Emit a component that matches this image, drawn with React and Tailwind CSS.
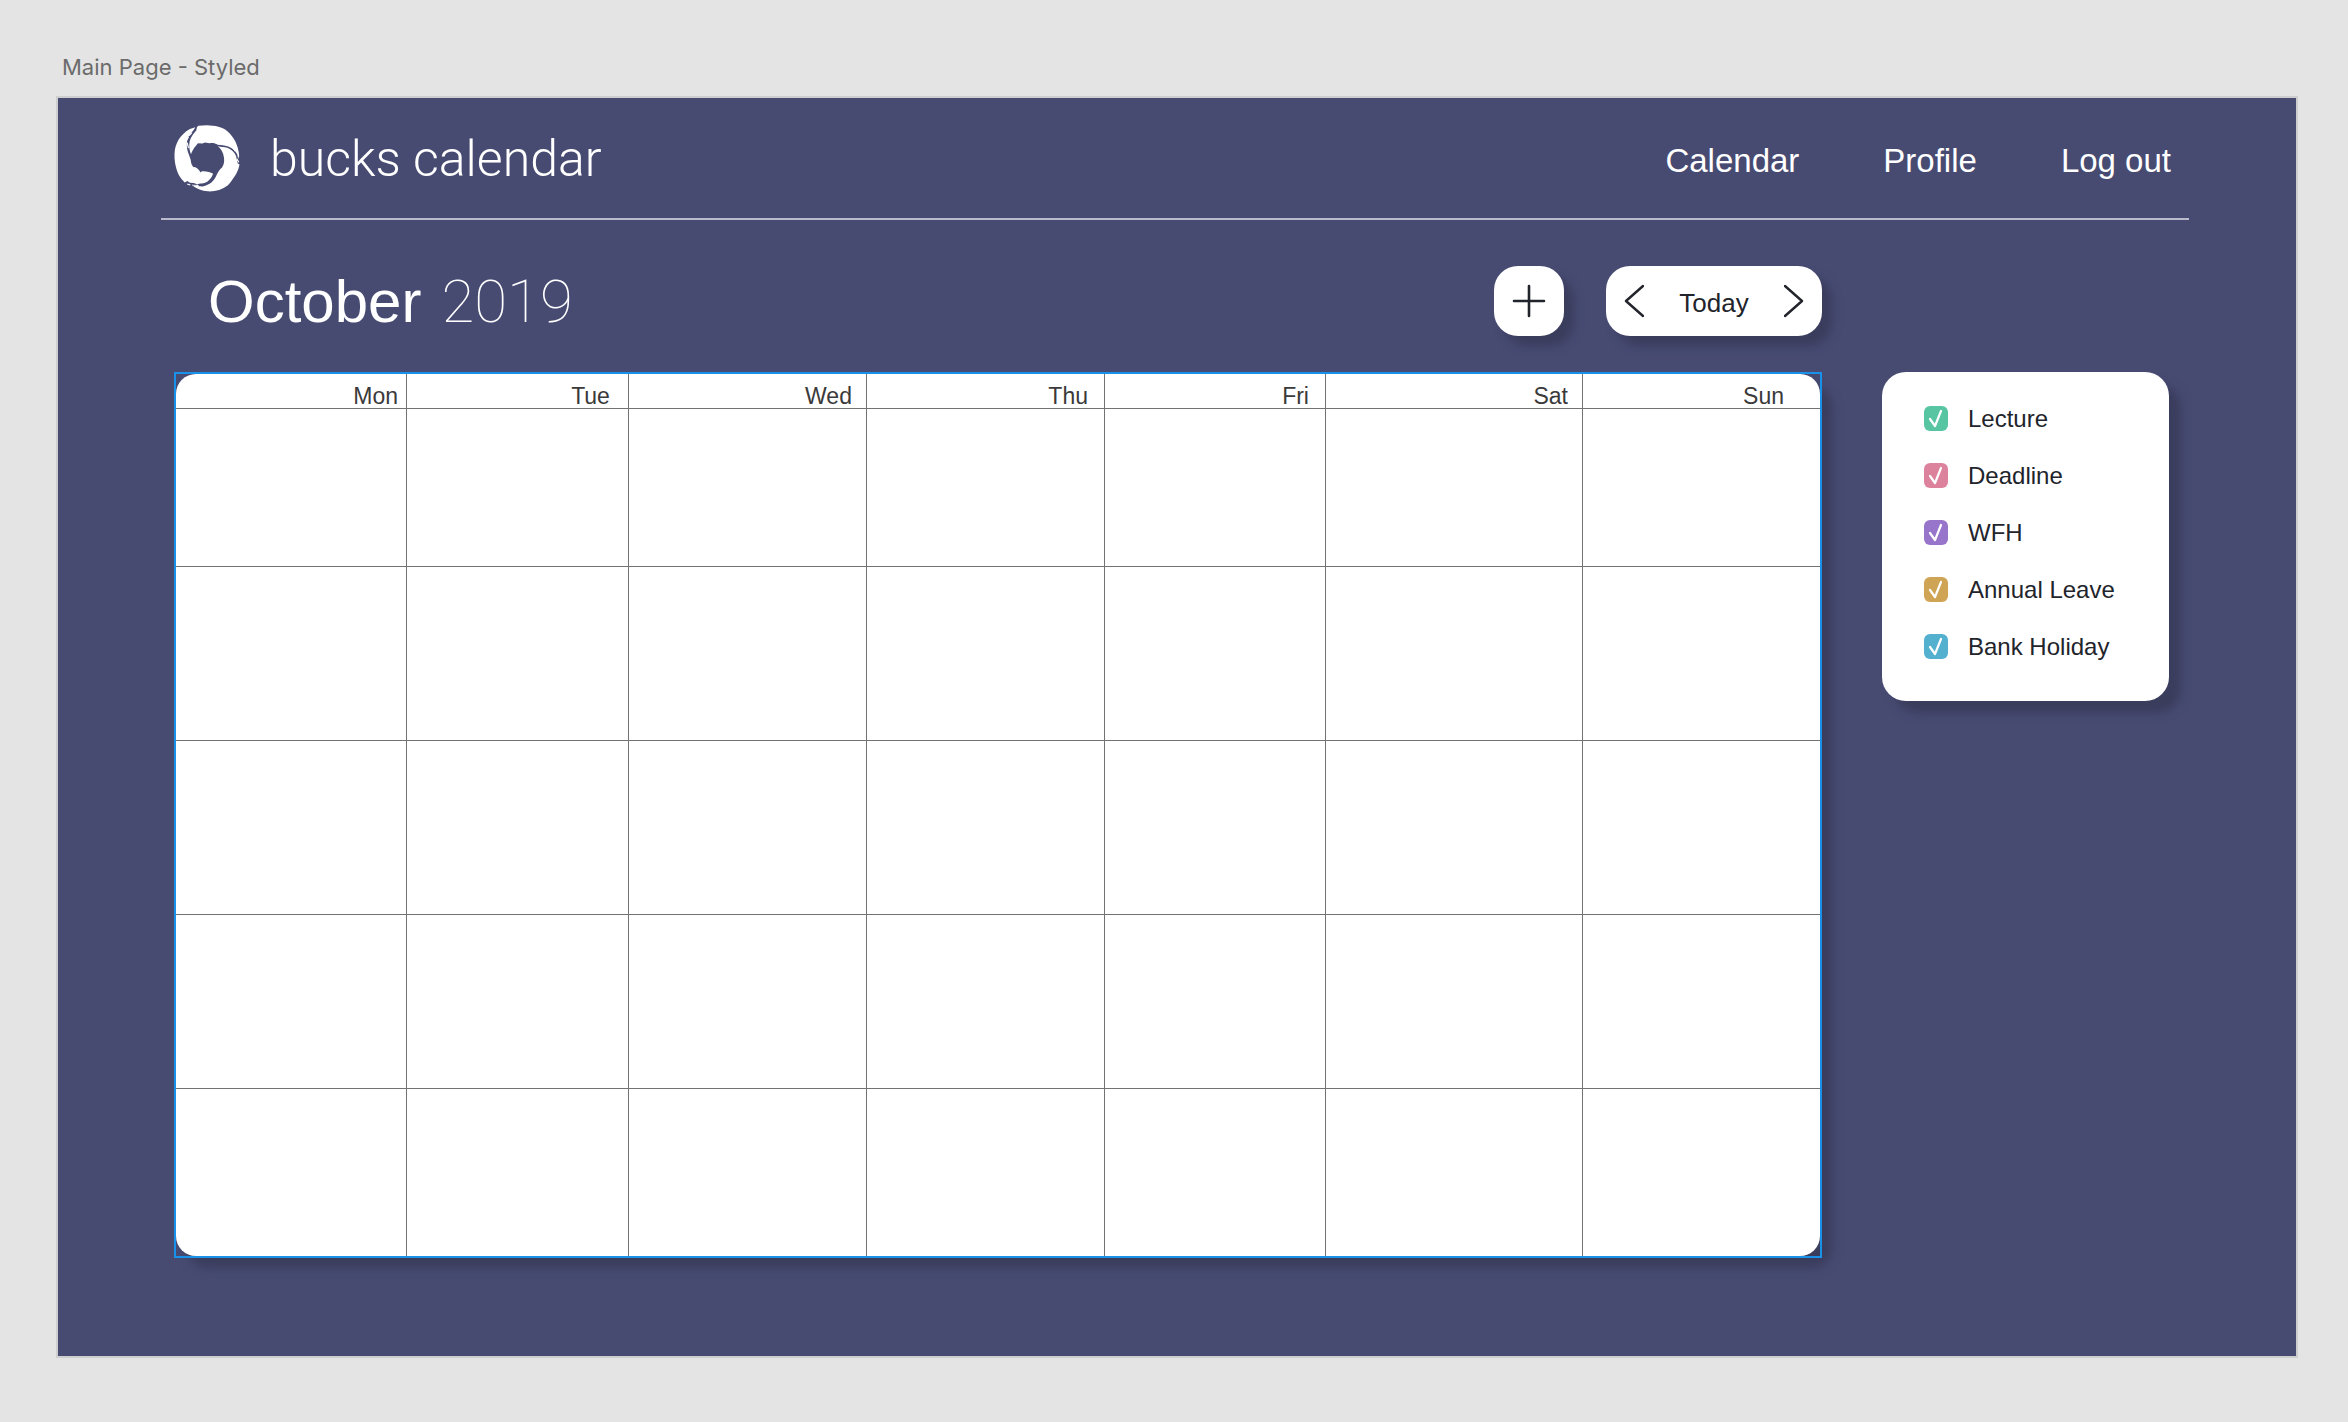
import React from "react";

const DAYS = [
  { name: "Mon", width: "w-[14.05%]", pad: "pr-2" },
  { name: "Tue", width: "w-[13.5%]", pad: "pr-[18px]" },
  { name: "Wed", width: "w-[14.48%]", pad: "pr-3.5" },
  { name: "Thu", width: "w-[14.48%]", pad: "pr-4" },
  { name: "Fri", width: "w-[13.44%]", pad: "pr-4" },
  { name: "Sat", width: "w-[15.63%]", pad: "pr-3.5" },
  { name: "Sun", width: "w-[14.42%]", pad: "pr-9" },
];

const WEEKS = ["h-[158px]", "h-[174px]", "h-[174px]", "h-[174px]", "h-[167px]"];

const CATEGORIES = [
  { id: "lecture", label: "Lecture", color: "bg-[#57c5a2]" },
  { id: "deadline", label: "Deadline", color: "bg-[#dd829c]" },
  { id: "wfh", label: "WFH", color: "bg-[#9775cb]" },
  { id: "annual-leave", label: "Annual Leave", color: "bg-[#cfa454]" },
  { id: "bank-holiday", label: "Bank Holiday", color: "bg-[#53b0cf]" },
];

function Logo() {
  return (
    <svg viewBox="26 29 199 203" className="h-[67px] w-[66px]" fill="#fff" aria-hidden="true">
      <path d="M93 46 L95 36 L99 31 L125 30 C150 31 172 34 188 49 C206 65 220 88 223 122 L220 132 L217 118 C212 107 203 99 190 94 C178 90 168 91 158 89 C150 83 142 83 133 84 L119 82 L112 85 L98 84 L92 92 C86 99 80 108 77 118 C72 106 70 92 73 78 C77 64 85 55 93 46 Z" />
      <path d="M158 93 C168 97 178 96 187 98 C198 103 206 109 211 118 C216 127 215 137 219 146 L224 149 C222 160 218 172 211 182 C203 192 199 203 188 212 C172 225 150 231 128 230 C110 229 94 222 82 213 L96 214 L112 215 C124 213 131 208 139 203 C146 197 151 190 155 180 C159 171 164 164 171 158 C178 147 178 138 177 128 C175 113 168 102 158 93 Z" />
      <path d="M90 36 C84 39 78 39 71 43 C48 57 33 78 28 105 C26 122 27 140 31 155 C36 177 45 191 58 203 L66 199 L74 204 L86 205 L96 209 C104 204 111 208 118 205 C130 201 139 191 144 177 C136 171 122 168 110 169 L106 173 C102 165 96 159 90 157 L84 156 C79 151 77 143 76 134 C72 121 66 110 65 98 C64 86 64 76 69 66 C73 56 82 51 90 36 Z" />
      <path d="M62 74 l6 -10 3 2 -6 10z M70 60 l9 -9 2 2 -8 9z M64 84 l3 -3 4 16 -3 3z M206 99 l7 8 -3 2 -6 -8z M217 130 l6 10 -2 3 -6 -9z M66 206 l10 3 -2 3 -9 -3z M80 210 l22 1 -4 3 -18 -2z" />
    </svg>
  );
}

function Chevron({ d }) {
  return (
    <svg viewBox="0 0 20 34" className="h-[34px] w-5" fill="none" stroke="#22242b" strokeWidth="2.4" strokeLinecap="round" strokeLinejoin="round" aria-hidden="true">
      <path d={d} />
    </svg>
  );
}

function Header() {
  return (
    <header className="ml-[103px] mr-[107px] flex items-center justify-between border-b-2 border-[#b9bacb] pb-[26px] pl-[13px] pr-[18px] pt-[27px]">
      <div className="flex items-center gap-[30px]">
        <Logo />
        <span className="font-[Roboto,sans-serif] text-[50px] font-light leading-[48px]">bucks calendar</span>
      </div>
      <nav className="flex gap-[84px] pt-1 text-[33px] leading-10">
        <a href="#calendar">Calendar</a>
        <a href="#profile">Profile</a>
        <a href="#logout">Log out</a>
      </nav>
    </header>
  );
}

function Toolbar() {
  return (
    <div className="flex items-center pb-[35px] pt-[45px]">
      <h1 className="flex flex-1 gap-5 pl-[34px] pt-0.5 text-[60px] leading-[70px]">
        <span>October</span>
        <span className="font-[Roboto,sans-serif] font-thin">2019</span>
      </h1>
      <button type="button" aria-label="Add event" className="grid size-[70px] place-items-center rounded-3xl bg-white shadow-[10px_10px_10px_#3b3d5d]">
        <svg viewBox="0 0 34 34" className="size-[34px]" fill="none" stroke="#22242b" strokeWidth="2.6" strokeLinecap="round" aria-hidden="true">
          <path d="M17 2V32M2 17H32" />
        </svg>
      </button>
      <div className="ml-[42px] flex h-[70px] w-[216px] items-center justify-between rounded-3xl bg-white px-[18px] text-[26px] text-[#22242b] shadow-[10px_10px_10px_#3b3d5d]">
        <button type="button" aria-label="Previous month">
          <Chevron d="M19 2L2 17L19 32" />
        </button>
        <button type="button" className="pt-1">Today</button>
        <button type="button" aria-label="Next month">
          <Chevron d="M1 2L18 17L1 32" />
        </button>
      </div>
    </div>
  );
}

function MonthGrid() {
  return (
    <div className="relative p-0.5 after:pointer-events-none after:absolute after:inset-0 after:border-2 after:border-[#1a91e8]">
      <div className="overflow-hidden rounded-[20px] bg-white shadow-[12px_12px_10px_#3b3d5d]">
        <table className="w-full table-fixed border-separate border-spacing-0 text-[#3a3a3a]">
          <thead>
            <tr>
              {DAYS.map((day) => (
                <th key={day.name} scope="col" className={`${day.width} ${day.pad} h-[35px] border-b border-r border-[#737373] pb-0 pt-2.5 text-right text-[23px] font-normal leading-6 last:border-r-0`}>
                  {day.name}
                </th>
              ))}
            </tr>
          </thead>
          <tbody>
            {WEEKS.map((height, week) => (
              <tr key={week} className="group">
                {DAYS.map((day) => (
                  <td key={day.name} className={`${height} border-b border-r border-[#737373] p-0 last:border-r-0 group-last:border-b-0`} />
                ))}
              </tr>
            ))}
          </tbody>
        </table>
      </div>
    </div>
  );
}

function Legend() {
  return (
    <aside className="mt-[152px] flex w-[287px] shrink-0 flex-col gap-[27px] self-start rounded-3xl bg-white pb-10 pl-[42px] pt-[31px] text-[#22242b] shadow-[12px_12px_10px_#3b3d5d]">
      {CATEGORIES.map((category) => (
        <label key={category.id} htmlFor={category.id} className="flex items-center gap-5 text-2xl">
          <span className="grid">
            <input id={category.id} type="checkbox" defaultChecked className={`${category.color} peer col-start-1 row-start-1 h-[25px] w-6 appearance-none rounded-md`} />
            <svg viewBox="0 0 24 25" className="pointer-events-none invisible col-start-1 row-start-1 h-[25px] w-6 peer-checked:visible" fill="none" stroke="#fff" strokeWidth="2.2" strokeLinecap="round" strokeLinejoin="round" aria-hidden="true">
              <path d="M6 13L11 20L17 5" />
            </svg>
          </span>
          <span className="pt-0.5 leading-7">{category.label}</span>
        </label>
      ))}
    </aside>
  );
}

export default function App() {
  return (
    <div className="min-h-screen bg-[#e4e4e4] pb-16 pl-14 pr-[50px] pt-[53px] font-['Liberation_Sans',Arial,sans-serif]">
      <p className="pb-[15px] pl-1.5 font-[Inter,sans-serif] text-[22px] leading-7 text-[#6b6b6b]">Main Page - Styled</p>
      <div className="border-2 border-[#cecece] bg-[#474b72] pb-[98px] text-white">
        <Header />
        <main className="ml-[116px] mr-[127px] flex gap-[60px]">
          <section className="min-w-0 flex-1">
            <Toolbar />
            <MonthGrid />
          </section>
          <Legend />
        </main>
      </div>
    </div>
  );
}
